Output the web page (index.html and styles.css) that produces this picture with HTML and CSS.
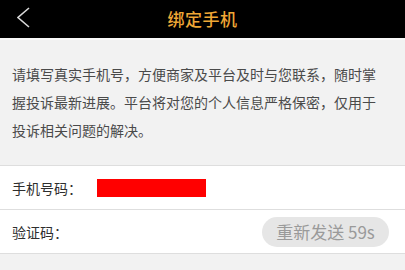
FILE: index.html
```html
<!DOCTYPE html>
<html lang="zh">
<head>
<meta charset="utf-8">
<link rel="stylesheet" href="styles.css">
</head>
<body>
<header class="topbar">
  <span class="back">
    <svg width="14" height="22" viewBox="0 0 14 22"><polyline points="12,1 1,10.5 12,20" fill="none" stroke="#d8d8d8" stroke-width="1.6"/></svg>
  </span>
  <h1 class="title">绑定手机</h1>
</header>
<section class="notice">
  <p>请填写真实手机号，方便商家及平台及时与您联系，随时掌握投诉最新进展。平台将对您的个人信息严格保密，仅用于投诉相关问题的解决。</p>
</section>
<div class="form">
  <div class="row">
    <span class="label">手机号码：</span>
    <span class="redact"></span>
  </div>
  <div class="row">
    <span class="label">验证码：</span>
    <span class="resend">重新发送 59s</span>
  </div>
</div>
</body>
</html>
```
FILE: styles.css
```css
* { box-sizing: border-box; }
html, body { margin: 0; padding: 0; }
body {
  width: 405px;
  height: 270px;
  overflow: hidden;
  background: #f2f2f2;
  font-family: "Noto Sans CJK SC", "Liberation Sans", sans-serif;
}
.topbar {
  position: relative;
  height: 40px;
  background: #000;
  border-bottom: 2px solid #fafafa;
  display: flex;
  align-items: center;
  justify-content: center;
}
.back {
  position: absolute;
  left: 17px;
  top: 7px;
  display: block;
  line-height: 0;
}
.title {
  margin: 0;
  font-size: 17px;
  font-weight: 500;
  line-height: 38px;
  color: #efa736;
  letter-spacing: 0.5px;
}
.notice {
  padding: 20px 22px 21px 12px;
  border-bottom: 1px solid #dedede;
}
.notice p {
  margin: 0;
  font-size: 14px;
  line-height: 28px;
  color: #4a4a4a;
}
.form { background: #fff; }
.row {
  height: 44px;
  display: flex;
  align-items: center;
  padding: 0 16px 0 12px;
  border-bottom: 1px solid #dedede;
}
.label {
  font-size: 14px;
  color: #2e2e2e;
  width: 85px;
}
.redact {
  width: 109px;
  height: 18px;
  background: #ff0000;
}
.resend {
  margin-left: auto;
  height: 30px;
  width: 127px;
  border-radius: 15px;
  background: #e6e6e6;
  color: #9a9a9a;
  font-size: 17px;
  line-height: 30px;
  text-align: center;
}
```
